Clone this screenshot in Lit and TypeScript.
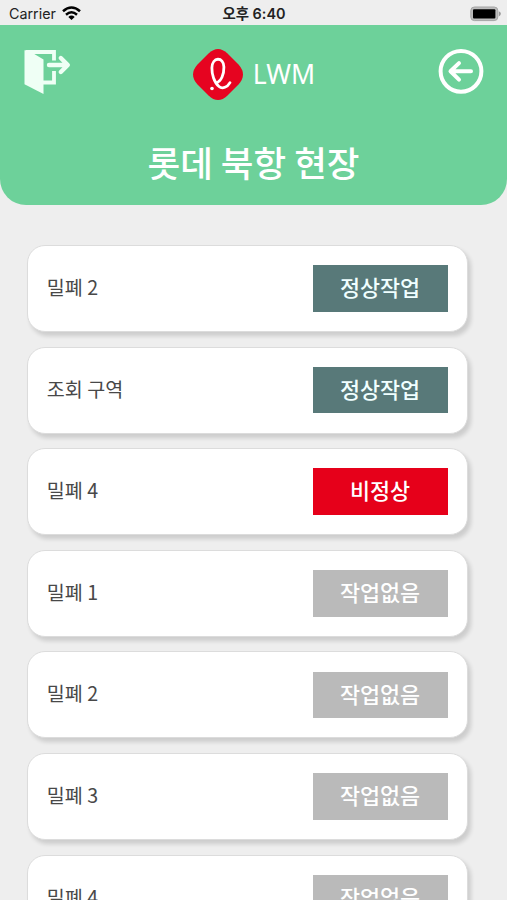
import { LitElement, html, css } from "lit";
import { customElement, property } from "lit/decorators.js";

type Status = "normal" | "alert" | "idle";

const LABELS: Record<Status, string> = {
  normal: "정상작업",
  alert: "비정상",
  idle: "작업없음",
};

const ZONES: { name: string; status: Status }[] = [
  { name: "밀폐 2", status: "normal" },
  { name: "조회 구역", status: "normal" },
  { name: "밀폐 4", status: "alert" },
  { name: "밀폐 1", status: "idle" },
  { name: "밀폐 2", status: "idle" },
  { name: "밀폐 3", status: "idle" },
  { name: "밀폐 4", status: "idle" },
];

@customElement("status-bar")
export class StatusBar extends LitElement {
  static styles = css`
    :host {
      display: grid;
      grid-template-columns: 1fr auto 1fr;
      align-items: center;
      height: 25.4px;
      padding: 2px 6px 0 9px;
      box-sizing: border-box;
      font: 14.3px/20px Inter, "Noto Sans CJK KR", sans-serif;
      color: #222;
    }
    .left {
      display: flex;
      align-items: center;
      gap: 6px;
    }
    .time {
      font-weight: 600;
      font-size: 14.4px;
      margin-right: 2px;
    }
    .battery {
      justify-self: end;
    }
    svg {
      display: block;
    }
  `;
  render() {
    return html`
      <div class="left">
        <span>Carrier</span>
        <svg width="19" height="15" viewBox="0 0 19 15" fill="none" stroke="#000" stroke-width="2.5">
          <path d="M1 5.3Q9.5-2.3 18 5.3M4 8.7q5.5-4.8 11 0" />
          <path d="M9.5 14 6.3 10.9q3.2-2.6 6.4 0z" fill="#000" stroke="none" />
        </svg>
      </div>
      <span class="time">오후 6:40</span>
      <svg class="battery" width="31" height="16" viewBox="0 0 31 16">
        <rect x=".8" y="1" width="27" height="13.6" rx="3.6" fill="#bcbcbc" stroke="#a5a5a5" />
        <rect x="3" y="3.2" width="22.4" height="9.4" rx="1" fill="#000" />
        <path d="M28.8 5.2q2.4 1.2 2 2.8q0 1.4-2 2.5z" fill="#999" />
      </svg>
    `;
  }
}

@customElement("site-header")
export class SiteHeader extends LitElement {
  @property() title = "";

  static styles = css`
    :host {
      display: block;
      height: 180px;
      box-sizing: border-box;
      padding: 22.6px 23px 0 22px;
      background: #6dd19a;
      border-radius: 0 0 26px 26px;
      color: #fff;
      font-family: "Noto Sans CJK KR", sans-serif;
    }
    .bar {
      display: grid;
      grid-template-columns: 1fr auto 1fr;
      align-items: start;
    }
    .brand {
      display: flex;
      align-items: center;
      gap: 10px;
      margin: 1.5px 0 0 2px;
    }
    .name {
      font: 26.6px/40px "Noto Sans", "Noto Sans CJK KR", sans-serif;
      margin-top: -2px;
    }
    .back {
      justify-self: end;
    }
    svg {
      display: block;
    }
    h1 {
      margin: 32px 0 0 1px;
      font-size: 35.5px;
      line-height: 60px;
      font-weight: 500;
      text-align: center;
    }
  `;
  render() {
    return html`
      <div class="bar">
        <svg width="50" height="48" viewBox="0 0 50 48" fill="none" stroke="#effff5">
          <path d="M4 4H32V12.5M20 34.5H32V23" stroke-width="3.8" />
          <path d="M2.5 2.2H6L21.5 11.5V46L2.5 36.2z" fill="#effff5" stroke="none" />
          <path d="M27 17H45M38.8 10 45.8 17 38.8 24" stroke-width="4.4" stroke-linecap="round" stroke-linejoin="round" />
        </svg>
        <div class="brand">
          <svg width="50" height="51" viewBox="0 0 50 51">
            <path d="M15.5 4.5Q25-4.5 34.5 4.5L45.5 15.5Q54.5 25.5 45.5 35.5L34.5 46.5Q25 55.5 15.5 46.5L4.5 35.5Q-4.5 25.5 4.5 15.5z" fill="#e60420" />
            <path d="M37 33.6C34.5 38 29.5 40.5 26 37.5C21 33.5 18.8 25 18.9 19C19 7.5 30.8 7.5 30.9 18C31 25 28.5 32.5 23 33.8" fill="none" stroke="#fff" stroke-width="2.8" stroke-linecap="round" />
            <circle cx="19" cy="39.5" r="1.8" fill="#fff" />
          </svg>
          <span class="name">LWM</span>
        </div>
        <svg class="back" width="46" height="46" viewBox="0 0 46 46" fill="none" stroke="#fff" stroke-linecap="round" stroke-linejoin="round">
          <circle cx="23" cy="23.3" r="20.4" stroke-width="4" />
          <path d="M33 23.3H13M21 15.1 12.5 23.3 21 31.6" stroke-width="4" />
        </svg>
      </div>
      <h1>${this.title}</h1>
    `;
  }
}

@customElement("zone-card")
export class ZoneCard extends LitElement {
  @property() name = "";
  @property() status: Status = "idle";

  static styles = css`
    :host {
      display: flex;
      align-items: center;
      justify-content: space-between;
      flex: none;
      height: 87px;
      box-sizing: border-box;
      padding: 0 19.5px 0 18.8px;
      background: #fff;
      border: 1px solid #dcdcdc;
      border-radius: 18px;
      box-shadow: 3px 4px 4px rgba(0, 0, 0, 0.14);
      font-family: "Noto Sans CJK KR", sans-serif;
    }
    .name {
      font-size: 19.6px;
      line-height: 28px;
      color: #484848;
      margin-top: -3px;
    }
    .badge {
      width: 135px;
      height: 46.5px;
      line-height: 43px;
      text-align: center;
      font-size: 21.8px;
      font-weight: 500;
      color: #fff;
    }
    .normal {
      background: #587979;
      color: #f0ffff;
    }
    .alert {
      background: #e6001a;
    }
    .idle {
      background: #bababa;
    }
  `;
  render() {
    return html`
      <span class="name">${this.name}</span>
      <span class="badge ${this.status}">${LABELS[this.status]}</span>
    `;
  }
}

@customElement("app-root")
export class AppRoot extends LitElement {
  static styles = css`
    :host {
      display: flex;
      flex-direction: column;
      height: 900px;
      overflow: hidden;
      background: #eee;
    }
    status-bar,
    site-header {
      flex: none;
    }
    .list {
      display: flex;
      flex-direction: column;
      gap: 14.6px;
      flex: 1;
      min-height: 0;
      padding: 39.6px 39px 0 27px;
    }
  `;
  render() {
    return html`
      <status-bar></status-bar>
      <site-header .title=${"롯데 북항 현장"}></site-header>
      <div class="list">
        ${ZONES.map((z) => html`<zone-card .name=${z.name} .status=${z.status}></zone-card>`)}
      </div>
    `;
  }
}
